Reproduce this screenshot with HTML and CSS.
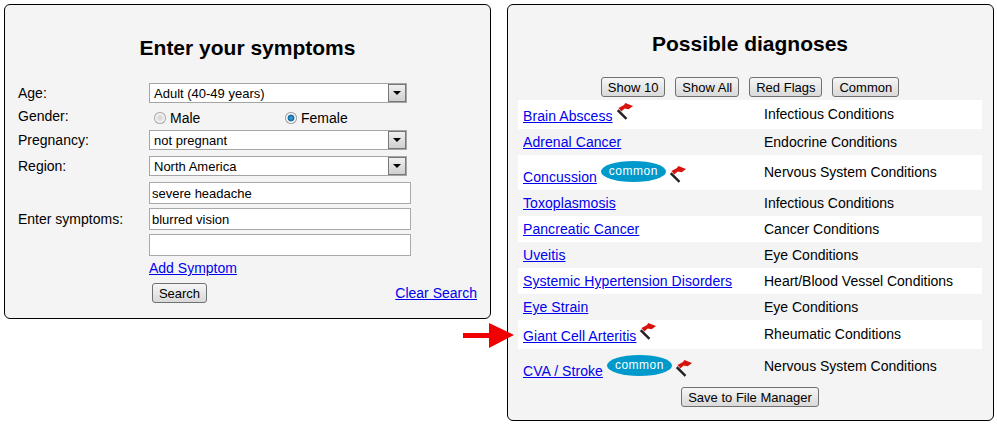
FILE: index.html
```html
<!DOCTYPE html>
<html lang="en">
<head>
    <meta charset="UTF-8">
    <title>Symptom Checker</title>
    <link rel="stylesheet" href="styles.css">
</head>
<body>

    <svg width="0" height="0" class="defs">
        <symbol id="flag" viewBox="0 0 16 17">
            <path d="M.7 7.2 L9.5 15.9" stroke="#222" stroke-width="2.4" fill="none"/>
            <path d="M1.5 5 L7 2 L8.3 0 L16 3 L11.7 6.2 L7.7 5.4 L4.3 8.6 Z" fill="#d8120c"/>
        </symbol>
    </svg>

    <div class="panel symptoms">
        <h1>Enter your symptoms</h1>

        <div class="form-row row-age">
            <label>Age:</label>
            <div class="select"><span class="value">Adult (40-49 years)</span><span class="arrow"></span></div>
        </div>
        <div class="form-row row-gender">
            <label>Gender:</label>
            <div class="radios">
                <span class="radio-item"><span class="radio"></span>Male</span>
                <span class="radio-item"><span class="radio checked"></span>Female</span>
            </div>
        </div>
        <div class="form-row">
            <label>Pregnancy:</label>
            <div class="select"><span class="value">not pregnant</span><span class="arrow"></span></div>
        </div>
        <div class="form-row">
            <label>Region:</label>
            <div class="select"><span class="value">North America</span><span class="arrow"></span></div>
        </div>
        <div class="form-row row-symptoms">
            <label>Enter symptoms:</label>
            <div class="inputs">
                <input type="text" value="severe headache">
                <input type="text" value="blurred vision">
                <input type="text">
            </div>
        </div>
        <div class="form-row row-add">
            <label></label>
            <a href="#">Add Symptom</a>
        </div>
        <div class="form-row row-search">
            <label></label>
            <div class="search-line">
                <button>Search</button>
                <a href="#">Clear Search</a>
            </div>
        </div>
    </div>

    <div class="panel diagnoses">
        <h1>Possible diagnoses</h1>

        <div class="filters">
            <button>Show 10</button>
            <button>Show All</button>
            <button>Red Flags</button>
            <button>Common</button>
        </div>

        <table>
            <tr class="tall">
                <td class="name"><a href="#">Brain Abscess</a><svg class="flag"><use href="#flag"/></svg></td>
                <td>Infectious Conditions</td>
            </tr>
            <tr>
                <td class="name"><a href="#">Adrenal Cancer</a></td>
                <td>Endocrine Conditions</td>
            </tr>
            <tr class="taller">
                <td class="name"><a href="#">Concussion</a><span class="common">common</span><svg class="flag"><use href="#flag"/></svg></td>
                <td>Nervous System Conditions</td>
            </tr>
            <tr>
                <td class="name"><a href="#">Toxoplasmosis</a></td>
                <td>Infectious Conditions</td>
            </tr>
            <tr>
                <td class="name"><a href="#">Pancreatic Cancer</a></td>
                <td>Cancer Conditions</td>
            </tr>
            <tr>
                <td class="name"><a href="#">Uveitis</a></td>
                <td>Eye Conditions</td>
            </tr>
            <tr>
                <td class="name"><a href="#">Systemic Hypertension Disorders</a></td>
                <td>Heart/Blood Vessel Conditions</td>
            </tr>
            <tr>
                <td class="name"><a href="#">Eye Strain</a></td>
                <td>Eye Conditions</td>
            </tr>
            <tr class="tall">
                <td class="name"><a href="#">Giant Cell Arteritis</a><svg class="flag"><use href="#flag"/></svg></td>
                <td>Rheumatic Conditions</td>
            </tr>
            <tr class="taller">
                <td class="name"><a href="#">CVA / Stroke</a><span class="common">common</span><svg class="flag"><use href="#flag"/></svg></td>
                <td>Nervous System Conditions</td>
            </tr>
        </table>

        <div class="save">
            <button>Save to File Manager</button>
        </div>
    </div>

    <!-- red pointer over the Giant Cell Arteritis row -->
    <svg class="pointer" width="52" height="26" viewBox="0 0 52 26">
        <path d="M0 10 H26 V0 L51 12 L26 25 V15 H0 Z" fill="#f00000"/>
    </svg>

</body>
</html>
```

FILE: styles.css
```css
body {
    margin: 0;
    padding: 4px 0 0 4px;
    display: flex;
    align-items: flex-start;
    gap: 16px;
    font-family: "Liberation Sans", Arial, sans-serif;
    font-size: 14px;
    color: #000;
    background-color: #fff;
}

a {
    color: #0000ee;
}

.defs {
    position: absolute;
}

.panel {
    flex: none;
    box-sizing: border-box;
    width: 487px;
    background-color: #f4f4f4;
    border: 1px solid #000;
    border-radius: 6px;
}

h1 {
    margin: 0;
    font-size: 21px;
    line-height: 24px;
    text-align: center;
}

button {
    font-family: inherit;
    font-size: 13px;
    height: 20px;
    padding: 0 6px;
    color: #000;
    background: linear-gradient(#f6f6f6, #d9d9d9);
    border: 1px solid #707070;
    border-radius: 3px;
}

/* left panel */
.symptoms {
    height: 315px;
    padding: 31px 13px 0;
}

.symptoms h1 {
    margin-bottom: 23px;
}

.form-row {
    display: flex;
    align-items: center;
    margin-bottom: 6px;
}

.form-row label {
    flex: 0 0 131px;
}

.row-age {
    margin-bottom: 0;
}

.row-gender {
    height: 27px;
    margin-bottom: 0;
}

.row-gender label {
    margin-top: -1px;
}

.select {
    box-sizing: border-box;
    display: flex;
    justify-content: space-between;
    width: 258px;
    height: 20px;
    background-color: #fff;
    border: 1px solid #a5a5a5;
    font-size: 13px;
    line-height: 19px;
}

.select .value {
    padding-left: 4px;
}

.arrow {
    box-sizing: border-box;
    width: 18px;
    height: 18px;
    background: linear-gradient(#f0f0f0, #cfcfcf);
    border: 1px solid #777;
    position: relative;
}

.arrow::after {
    content: "";
    position: absolute;
    left: 4px;
    top: 6px;
    border-left: 4px solid transparent;
    border-right: 4px solid transparent;
    border-top: 4px solid #000;
}

.radios {
    display: flex;
    padding: 3px 0 0 5px;
}

.radio-item {
    display: flex;
    align-items: center;
    width: 131px;
}

.radio {
    width: 12px;
    height: 12px;
    margin-right: 4px;
    border-radius: 50%;
    background: radial-gradient(circle closest-side, #d4d4d4 0, #e6e6e6 55%, #fafafa 72%, #b0b0b0 90%, #8c8c8c 100%);
}

.radio.checked {
    background: radial-gradient(circle closest-side, #45a8dd 0, #0a6aa6 50%, #e4e4e4 62%, #fafafa 74%, #a8a8a8 90%, #808080 100%);
}

.row-symptoms {
    margin-bottom: 4px;
}

.inputs {
    display: flex;
    flex-direction: column;
    gap: 4px;
}

.inputs input {
    box-sizing: border-box;
    width: 262px;
    height: 22px;
    margin: 0;
    padding: 0 2px;
    font-family: inherit;
    font-size: 13px;
    border: 1px solid #a9a9a9;
    border-radius: 0;
    background-color: #fff;
}

.row-add {
    height: 16px;
    margin-bottom: 7px;
}

.row-search {
    margin-bottom: 0;
}

.search-line {
    flex: 1;
    display: flex;
    justify-content: space-between;
    align-items: center;
    padding-left: 3px;
}

.search-line button {
    width: 55px;
    padding: 0;
}

/* right panel */
.diagnoses {
    height: 417px;
    padding: 27px 11px 0 10px;
}

.filters {
    display: flex;
    justify-content: center;
    gap: 10px;
    margin: 21px 0 3px;
}

table {
    width: 464px;
    border-collapse: collapse;
    table-layout: fixed;
}

tr {
    height: 26px;
}

tr:nth-child(odd) {
    background-color: #fff;
}

tr.tall {
    height: 29px;
}

tr.taller {
    height: 35px;
}

td {
    padding: 0 0 1px;
}

td.name {
    width: 241px;
    padding: 0 0 0 5px;
}

td.name a {
    letter-spacing: .07px;
}

tr.tall td.name {
    padding-bottom: 2px;
}

tr.taller td.name {
    padding-top: 4px;
}

.flag {
    width: 16px;
    height: 17px;
    margin-left: 4px;
    vertical-align: 1px;
}

tr.taller .flag {
    vertical-align: -1px;
}

.common {
    display: inline-block;
    width: 65px;
    height: 21px;
    margin: -3px 0 0 4px;
    font-size: 12px;
    line-height: 20px;
    letter-spacing: .5px;
    text-align: center;
    color: #fff;
    background-color: #0099cc;
    border-radius: 50%;
    vertical-align: 7px;
}

.save {
    display: flex;
    justify-content: center;
    margin-top: 3px;
}

.pointer {
    position: absolute;
    left: 463px;
    top: 323px;
}
```
